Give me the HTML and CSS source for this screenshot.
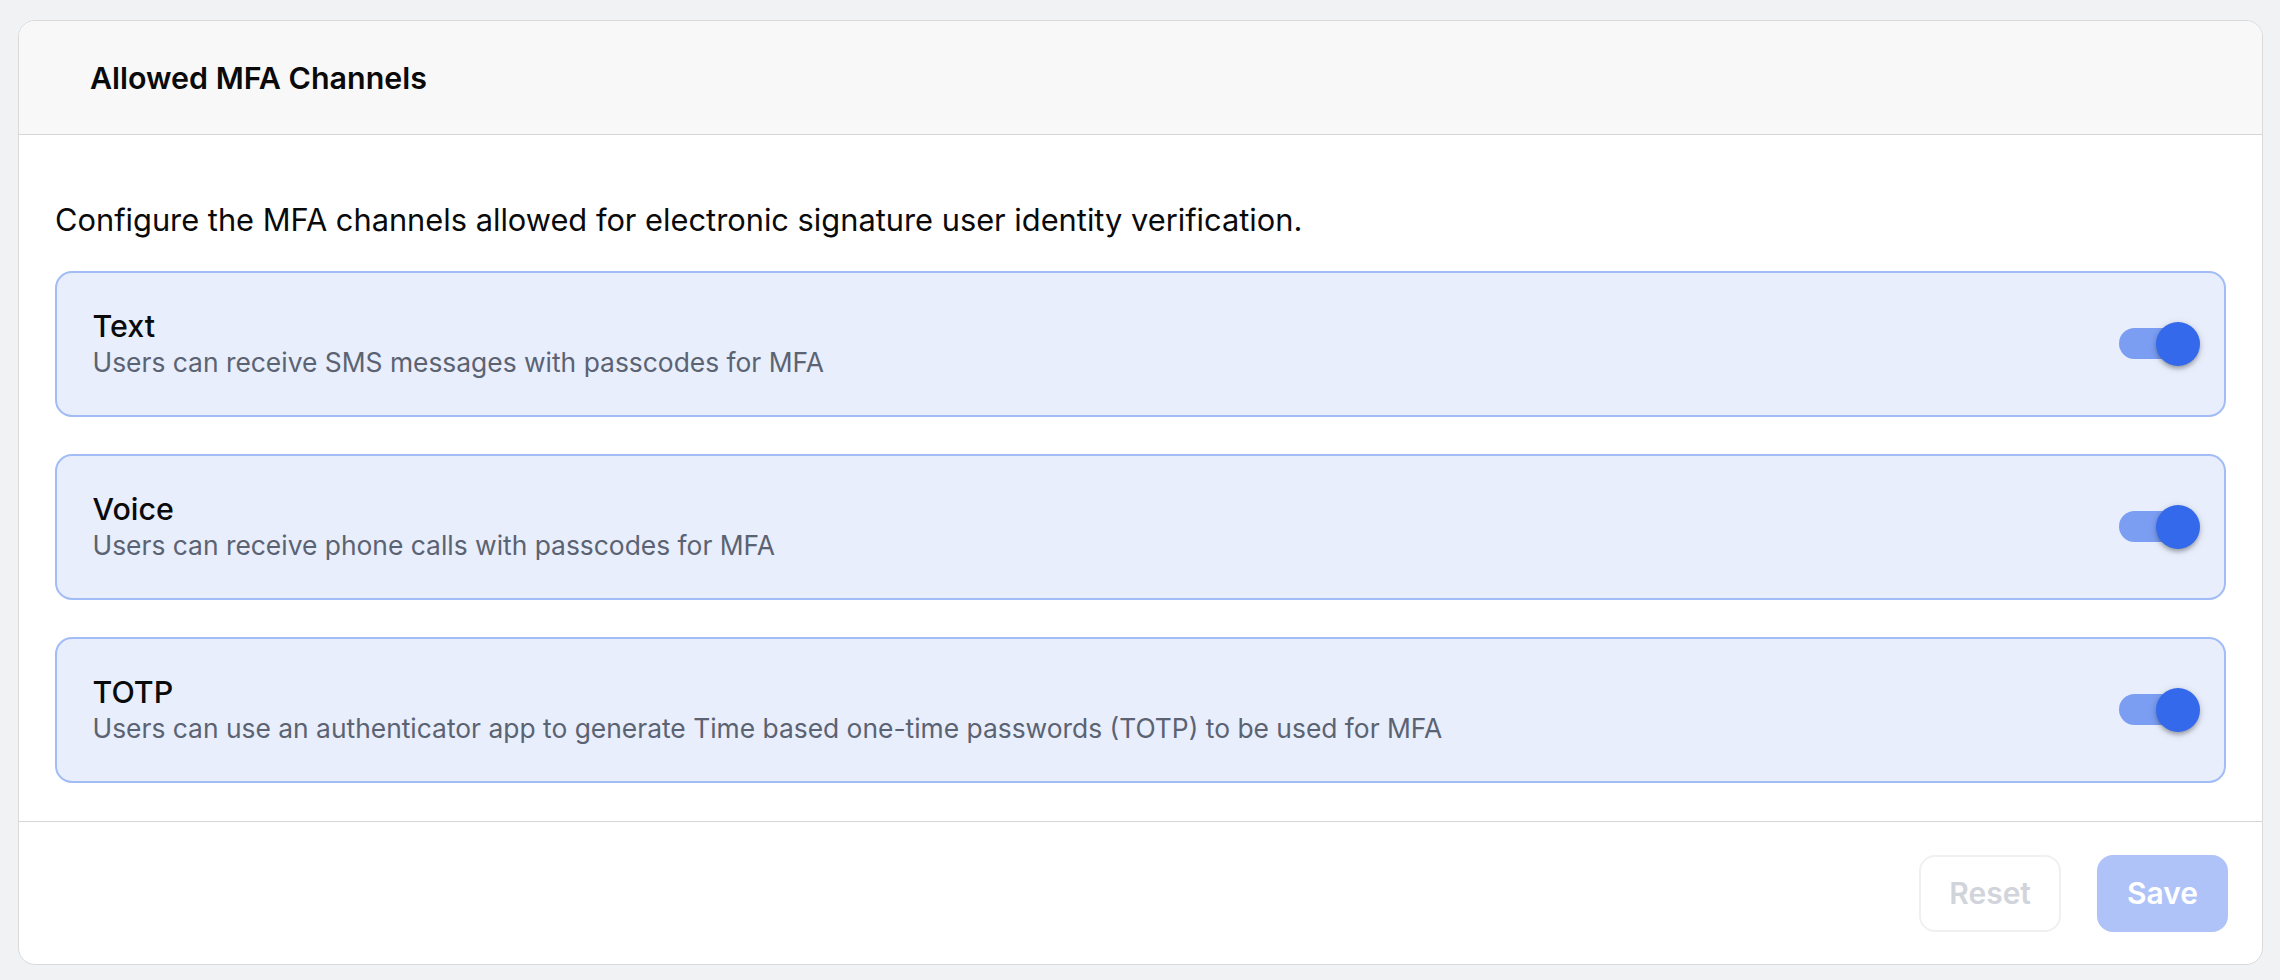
FILE: index.html
```html
<!DOCTYPE html>
<html lang="en">
<head>
<meta charset="utf-8">
<title>Allowed MFA Channels</title>
<link rel="stylesheet" href="styles.css">
</head>
<body>
<div class="page">
  <section class="panel">
    <header class="panel-header">
      <h2 class="panel-title">Allowed MFA Channels</h2>
    </header>
    <div class="panel-body">
      <p class="intro">Configure the MFA channels allowed for electronic signature user identity verification.</p>
      <div class="channels">
        <div class="channel">
          <div class="channel-text">
            <div class="channel-name">Text</div>
            <div class="channel-desc">Users can receive SMS messages with passcodes for MFA</div>
          </div>
          <span class="switch" role="switch" aria-checked="true"><span class="switch-track"></span><span class="switch-thumb"></span></span>
        </div>
        <div class="channel">
          <div class="channel-text">
            <div class="channel-name">Voice</div>
            <div class="channel-desc">Users can receive phone calls with passcodes for MFA</div>
          </div>
          <span class="switch" role="switch" aria-checked="true"><span class="switch-track"></span><span class="switch-thumb"></span></span>
        </div>
        <div class="channel">
          <div class="channel-text">
            <div class="channel-name">TOTP</div>
            <div class="channel-desc">Users can use an authenticator app to generate Time based one-time passwords (TOTP) to be used for MFA</div>
          </div>
          <span class="switch" role="switch" aria-checked="true"><span class="switch-track"></span><span class="switch-thumb"></span></span>
        </div>
      </div>
    </div>
    <footer class="panel-footer">
      <button class="btn btn-reset" type="button">Reset</button>
      <button class="btn btn-save" type="button">Save</button>
    </footer>
  </section>
</div>
</body>
</html>
```
FILE: styles.css
```css
* { box-sizing: border-box; }

html, body {
  margin: 0;
  padding: 0;
}

body {
  background: #f1f2f4;
  font-family: Inter, "Noto Sans", "Liberation Sans", sans-serif;
  color: #0a0a0a;
}

.page {
  height: 980px;
  padding: 20px 17px 15px 18px;
}

.panel {
  height: 945px;
  display: flex;
  flex-direction: column;
  background: #ffffff;
  border: 1.5px solid #d9dadc;
  border-radius: 17px;
  overflow: hidden;
}

.panel-header {
  height: 114px;
  flex: none;
  display: flex;
  align-items: center;
  padding-left: 71px;
  background: #f8f8f8;
  border-bottom: 1.5px solid #d6d6d6;
}

.panel-title {
  margin: 0;
  font-size: 30.4px;
  font-weight: 600;
  line-height: 36px;
  color: #0a0a0a;
}

.panel-body {
  flex: 1;
  padding: 36px;
}

.intro {
  margin: 26px 0 29px;
  font-size: 30.8px;
  line-height: 45px;
  font-weight: 400;
}

.channels {
  display: flex;
  flex-direction: column;
  gap: 37px;
}

.channel {
  height: 146px;
  display: flex;
  align-items: center;
  justify-content: space-between;
  padding: 0 24.5px 0 35.5px;
  background: #e8eefc;
  border: 2px solid #a2bcf6;
  border-radius: 17px;
}

.channel-name {
  font-size: 30.4px;
  line-height: 36px;
  font-weight: 500;
  color: #0a0a0a;
}

.channel-desc {
  font-size: 26.4px;
  line-height: 36px;
  color: #5b6372;
}

.switch {
  position: relative;
  flex: none;
  width: 81px;
  height: 44px;
}

.switch-track {
  position: absolute;
  left: 0;
  top: 6px;
  width: 75px;
  height: 31px;
  border-radius: 16px;
  background: #7b9ef3;
}

.switch-thumb {
  position: absolute;
  left: 37px;
  top: 0;
  width: 44px;
  height: 44px;
  border-radius: 50%;
  background: #3469ec;
  box-shadow: 0 4px 4px -2px rgba(0,0,0,0.2), 0 2px 5px 0 rgba(0,0,0,0.14), 0 2px 10px 0 rgba(0,0,0,0.12);
}

.panel-footer {
  height: 143px;
  flex: none;
  display: flex;
  align-items: center;
  justify-content: flex-end;
  gap: 36px;
  padding-right: 34px;
  border-top: 1.5px solid #d6d6d6;
}

.btn {
  height: 77px;
  padding: 0 28px;
  border-radius: 16px;
  font-family: Inter, "Noto Sans", "Liberation Sans", sans-serif;
  font-size: 30px;
  font-weight: 600;
  cursor: default;
}

.btn-reset {
  background: #ffffff;
  border: 2px solid #eff0f2;
  color: #d1d5db;
}

.btn-save {
  background: #afc3f8;
  border: 2px solid #afc3f8;
  color: #ffffff;
}
```
